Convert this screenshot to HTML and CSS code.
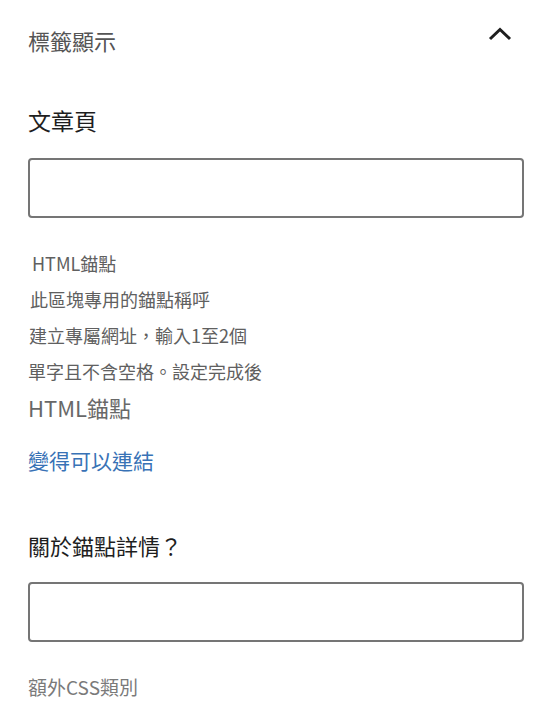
FILE: index.html
```html
<!DOCTYPE html>
<html lang="zh-Hant">
<head>
<meta charset="utf-8">
<link rel="stylesheet" href="styles.css">
</head>
<body>
<div class="panel">
  <div class="panel-header">
    <span class="panel-title">標籤顯示</span>
    <svg class="chevron" width="26" height="16" viewBox="0 0 26 16"><path d="M3 13 L13 3.5 L23 13" fill="none" stroke="#1e1e1e" stroke-width="3"/></svg>
  </div>
  <div class="field-label">文章頁</div>
  <div class="text-input"></div>
  <div class="help">
    <div class="help-line l1">HTML錨點</div>
    <div class="help-line l2">此區塊專用的錨點稱呼</div>
    <div class="help-line l3">建立專屬網址，輸入1至2個</div>
    <div class="help-line">單字且不含空格。設定完成後</div>
    <div class="help-line big">HTML錨點</div>
  </div>
  <a class="help-link">變得可以連結</a>
  <div class="field-label second">關於錨點詳情？</div>
  <div class="text-input second-input"></div>
  <div class="css-label">額外CSS類別</div>
</div>
</body>
</html>
```
FILE: styles.css
```css
html, body {
  margin: 0;
  padding: 0;
  background: #ffffff;
}
body {
  font-family: "Noto Sans CJK TC", "Noto Sans", sans-serif;
  overflow: hidden;
}
.panel {
  padding: 0 24px 0 28px;
}
.panel-header {
  box-sizing: border-box;
  height: 84px;
  padding-bottom: 4px;
  display: flex;
  align-items: center;
  justify-content: space-between;
}
.panel-title {
  font-size: 22px;
  line-height: 30px;
  color: #555555;
}
.chevron {
  margin-right: 11px;
  margin-top: -13px;
}
.field-label {
  margin-top: 20px;
  font-size: 23px;
  line-height: 32px;
  color: #1e1e1e;
}
.field-label.second {
  margin-top: 53px;
  font-size: 22px;
}
.text-input {
  margin-top: 22px;
  height: 56px;
  border: 2px solid #757575;
  border-radius: 4px;
}
.second-input {
  margin-top: 21px;
}
.help {
  margin-top: 27px;
}
.help-line {
  font-size: 18px;
  line-height: 36px;
  color: #606060;
}
.help-line.l1 { padding-left: 4px; }
.help-line.l2 { padding-left: 2px; }
.help-line.l3 { padding-left: 1px; }
.help-line.big {
  font-size: 22px;
  color: #686868;
}
.help-link {
  display: block;
  margin-top: 19px;
  font-size: 21px;
  line-height: 32px;
  color: #3872b6;
}
.css-label {
  margin-top: 30px;
  font-size: 19px;
  line-height: 30px;
  color: #7a7a7a;
}
```
